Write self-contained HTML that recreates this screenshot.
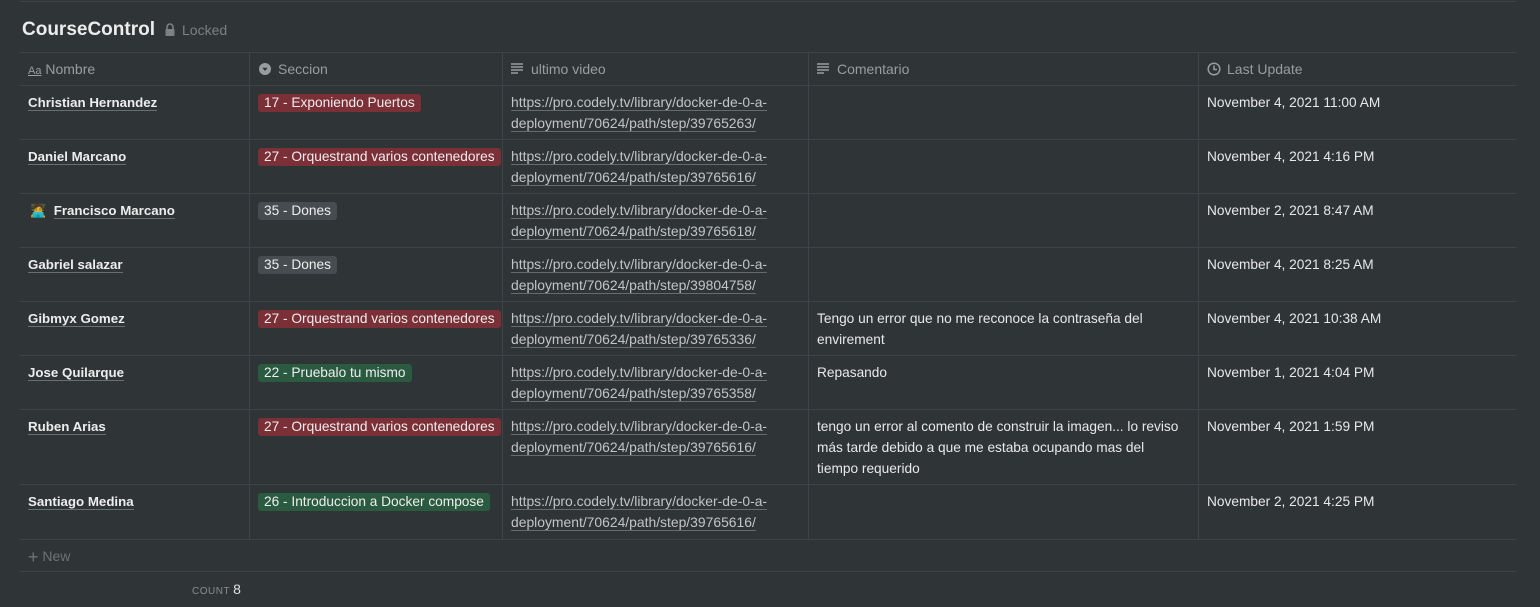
<!DOCTYPE html>
<html><head><meta charset="utf-8"><style>
*{margin:0;padding:0;box-sizing:border-box}
body{width:1540px;height:607px;background:#2f3437;font-family:"Liberation Sans",sans-serif;color:rgba(255,255,255,.86);position:relative;overflow:hidden;font-size:13.5px}
.topline{position:absolute;left:20px;right:24px;top:1px;height:1px;background:#3f4448}
.title{position:absolute;left:22px;top:19px;font-size:19px;font-weight:bold;color:#ececec}
.lock{position:absolute;left:164px;top:23px;width:12px;height:14px}
.locked{position:absolute;left:182px;top:22px;font-size:14px;color:#7d8184}
.hl{position:absolute;left:20px;width:1496px;height:1px;background:#3f4448}
.vl{position:absolute;width:1px;background:#3f4448;top:52px;height:487px}
.h{position:absolute;top:61px;font-size:14px;color:#9a9d9f}
.c{position:absolute;line-height:21px}
.name{font-weight:bold;font-size:13.3px;color:#ededed;border-bottom:1px solid #6a6e71;line-height:18px}
.tag{display:inline-block;padding:0 6px;border-radius:3px;line-height:18px;font-size:13.7px;color:#eee}
.r{background:#7b2f37}.g{background:#464c50}.gr{background:#2a5a3f}
.link{color:#c3c4c5;font-size:13.9px}
.link span{border-bottom:1px solid #666b6e}
.date{color:#e8e8e8;font-size:13.7px}
</style></head><body>
<div class="topline"></div>
<div class="title">CourseControl</div>
<svg class="lock" viewBox="0 0 12 14"><path d="M3 6V4a3 3 0 0 1 6 0v2" fill="none" stroke="#7d8184" stroke-width="1.6"/><rect x="1.5" y="6" width="9" height="7" rx="1" fill="#7d8184"/></svg>
<div class="locked">Locked</div>

<div class="hl" style="top:52px"></div>
<div class="hl" style="top:85px"></div>
<div class="hl" style="top:139px"></div>
<div class="hl" style="top:193px"></div>
<div class="hl" style="top:247px"></div>
<div class="hl" style="top:301px"></div>
<div class="hl" style="top:355px"></div>
<div class="hl" style="top:409px"></div>
<div class="hl" style="top:484px"></div>
<div class="hl" style="top:539px"></div>
<div class="hl" style="top:571px"></div>
<div class="vl" style="left:249px"></div>
<div class="vl" style="left:502px"></div>
<div class="vl" style="left:808px"></div>
<div class="vl" style="left:1198px"></div>

<div class="h" style="left:28px"><span style="font-size:11px;text-decoration:underline">Aa</span> Nombre</div>
<svg style="position:absolute;left:259px;top:63px" width="12" height="12" viewBox="0 0 12 12"><circle cx="6" cy="6" r="6" fill="#9a9d9f"/><path d="M3.3 4.8h5.4L6 8z" fill="#2f3437"/></svg>
<div class="h" style="left:278px">Seccion</div>
<svg style="position:absolute;left:511px;top:63px" width="12" height="11" viewBox="0 0 12 11"><path d="M0 1h12M0 4h12M0 7h12M0 10h7" stroke="#9a9d9f" stroke-width="1.6"/></svg>
<div class="h" style="left:531px">ultimo video</div>
<svg style="position:absolute;left:817px;top:63px" width="12" height="11" viewBox="0 0 12 11"><path d="M0 1h12M0 4h12M0 7h12M0 10h7" stroke="#9a9d9f" stroke-width="1.6"/></svg>
<div class="h" style="left:837px">Comentario</div>
<svg style="position:absolute;left:1207px;top:62px" width="14" height="14" viewBox="0 0 14 14"><circle cx="7" cy="7" r="5.8" fill="none" stroke="#9a9d9f" stroke-width="1.5"/><path d="M7 3.5V7.5H10" fill="none" stroke="#9a9d9f" stroke-width="1.5"/></svg>
<div class="h" style="left:1227px">Last Update</div>

<div class="c" style="left:28px;top:92px"><span class="name">Christian Hernandez</span></div>
<div class="c" style="left:258px;top:92px"><span class="tag r">17 - Exponiendo Puertos</span></div>
<div class="c link" style="left:511px;top:92px"><span>https://pro.codely.tv/library/docker-de-0-a-</span><br><span>deployment/70624/path/step/39765263/</span></div>
<div class="c date" style="left:1207px;top:92px">November 4, 2021 11:00 AM</div>

<div class="c" style="left:28px;top:146px"><span class="name">Daniel Marcano</span></div>
<div class="c" style="left:258px;top:146px"><span class="tag r">27 - Orquestrand varios contenedores</span></div>
<div class="c link" style="left:511px;top:146px"><span>https://pro.codely.tv/library/docker-de-0-a-</span><br><span>deployment/70624/path/step/39765616/</span></div>
<div class="c date" style="left:1207px;top:146px">November 4, 2021 4:16 PM</div>

<div class="c" style="left:30px;top:200px"><span style="font-size:13px">🧑‍💻</span>&nbsp; <span class="name">Francisco Marcano</span></div>
<div class="c" style="left:258px;top:200px"><span class="tag g">35 - Dones</span></div>
<div class="c link" style="left:511px;top:200px"><span>https://pro.codely.tv/library/docker-de-0-a-</span><br><span>deployment/70624/path/step/39765618/</span></div>
<div class="c date" style="left:1207px;top:200px">November 2, 2021 8:47 AM</div>

<div class="c" style="left:28px;top:254px"><span class="name">Gabriel salazar</span></div>
<div class="c" style="left:258px;top:254px"><span class="tag g">35 - Dones</span></div>
<div class="c link" style="left:511px;top:254px"><span>https://pro.codely.tv/library/docker-de-0-a-</span><br><span>deployment/70624/path/step/39804758/</span></div>
<div class="c date" style="left:1207px;top:254px">November 4, 2021 8:25 AM</div>

<div class="c" style="left:28px;top:308px"><span class="name">Gibmyx Gomez</span></div>
<div class="c" style="left:258px;top:308px"><span class="tag r">27 - Orquestrand varios contenedores</span></div>
<div class="c link" style="left:511px;top:308px"><span>https://pro.codely.tv/library/docker-de-0-a-</span><br><span>deployment/70624/path/step/39765336/</span></div>
<div class="c date" style="left:817px;top:308px;width:375px">Tengo un error que no me reconoce la contraseña del envirement</div>
<div class="c date" style="left:1207px;top:308px">November 4, 2021 10:38 AM</div>

<div class="c" style="left:28px;top:362px"><span class="name">Jose Quilarque</span></div>
<div class="c" style="left:258px;top:362px"><span class="tag gr">22 - Pruebalo tu mismo</span></div>
<div class="c link" style="left:511px;top:362px"><span>https://pro.codely.tv/library/docker-de-0-a-</span><br><span>deployment/70624/path/step/39765358/</span></div>
<div class="c date" style="left:817px;top:362px">Repasando</div>
<div class="c date" style="left:1207px;top:362px">November 1, 2021 4:04 PM</div>

<div class="c" style="left:28px;top:416px"><span class="name">Ruben Arias</span></div>
<div class="c" style="left:258px;top:416px"><span class="tag r">27 - Orquestrand varios contenedores</span></div>
<div class="c link" style="left:511px;top:416px"><span>https://pro.codely.tv/library/docker-de-0-a-</span><br><span>deployment/70624/path/step/39765616/</span></div>
<div class="c date" style="left:817px;top:416px;width:372px">tengo un error al comento de construir la imagen... lo reviso más tarde debido a que me estaba ocupando mas del tiempo requerido</div>
<div class="c date" style="left:1207px;top:416px">November 4, 2021 1:59 PM</div>

<div class="c" style="left:28px;top:491px"><span class="name">Santiago Medina</span></div>
<div class="c" style="left:258px;top:491px"><span class="tag gr">26 - Introduccion a Docker compose</span></div>
<div class="c link" style="left:511px;top:491px"><span>https://pro.codely.tv/library/docker-de-0-a-</span><br><span>deployment/70624/path/step/39765616/</span></div>
<div class="c date" style="left:1207px;top:491px">November 2, 2021 4:25 PM</div>

<div class="c" style="left:28px;top:546px;color:#6f7376;font-size:14px"><span style="font-size:18px;vertical-align:-2px">+</span> New</div>
<div class="c" style="left:192px;top:579px;color:#8a8d90;font-size:10px;letter-spacing:.5px">COUNT <span style="font-size:14px;color:#e0e0e0;letter-spacing:0">8</span></div>
</body></html>
